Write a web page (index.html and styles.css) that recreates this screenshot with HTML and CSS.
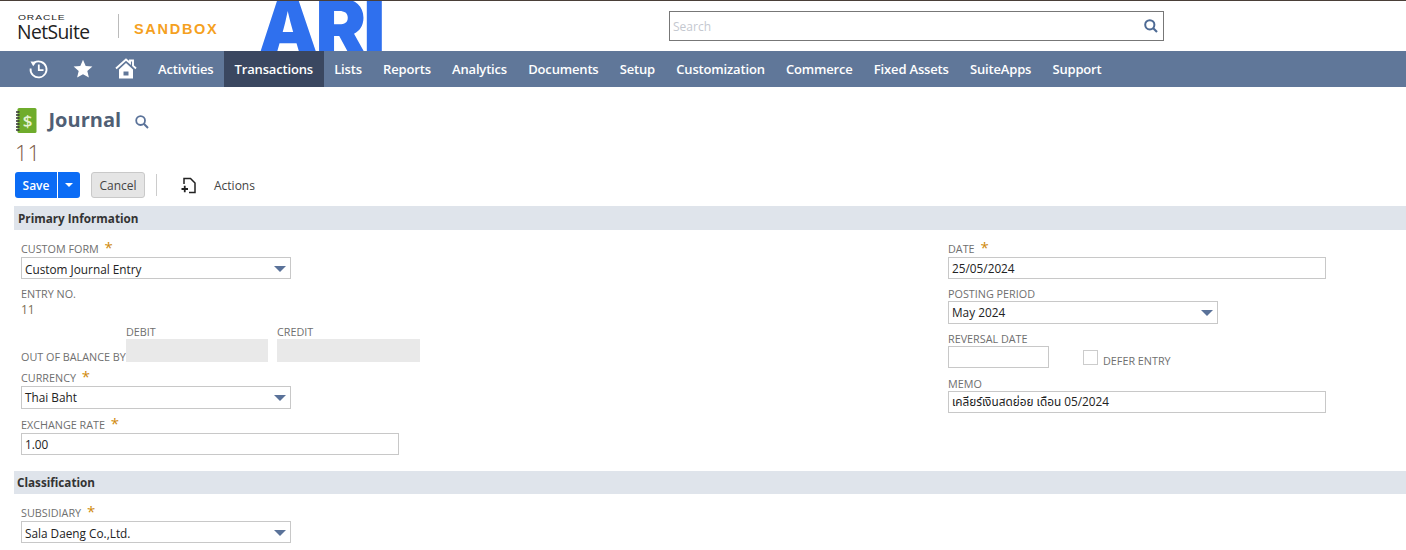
FILE: index.html
```html
<!DOCTYPE html>
<html lang="en">
<head>
<meta charset="utf-8">
<title>Journal - NetSuite</title>
<link rel="stylesheet" href="styles.css">
</head>
<body>
<header class="topbar">
  <div class="brand">
    <div class="ns-logo"><span class="ns-oracle">ORACLE</span><span class="ns-name">NetSuite</span></div>
    <div class="brand-sep"></div>
    <div class="sandbox">SANDBOX</div>
  </div>
  <div class="ari-logo"><span>ARI</span></div>
  <div class="search">
    <span class="search-ph">Search</span>
    <svg class="search-icon" width="14" height="14" viewBox="0 0 14 14"><circle cx="5.8" cy="5.8" r="4.6" fill="none" stroke="#4d6a94" stroke-width="2"/><path d="M9 9l4 4" stroke="#4d6a94" stroke-width="2.2"/></svg>
  </div>
</header>
<nav class="nav">
  <div class="nav-icons">
    <svg width="20" height="20" viewBox="0 0 20 20"><path d="M5.300 3.600A8 8 0 1 1 1.600 9.500" fill="none" stroke="#fff" stroke-width="1.800"/><path d="M1.500 2.500l6 .2-3.300 4.500z" fill="#fff"/><path d="M9.800 5.500V11.200h4.700" fill="none" stroke="#fff" stroke-width="1.800"/></svg>
    <svg width="20" height="20" viewBox="0 0 20 20"><path d="M10 .8l2.700 6.200 6.700.6-5.100 4.400 1.600 6.600L10 15.200l-5.900 3.400 1.600-6.600L.6 7.600l6.700-.6z" fill="#fff"/></svg>
    <svg class="home-icon" width="22" height="21" viewBox="0 0 22 21"><path d="M1 10.500L11 1.500l4 3.500V2.500h3v5.200L21 10.500" fill="none" stroke="#fff" stroke-width="1.900"/><path fill-rule="evenodd" d="M4 11.500L11 5l7 6.500V20.500H4zM8.500 13.500v4h5v-4z" fill="#fff"/></svg>
  </div>
  <a class="nav-item">Activities</a>
  <a class="nav-item active">Transactions</a>
  <a class="nav-item">Lists</a>
  <a class="nav-item">Reports</a>
  <a class="nav-item">Analytics</a>
  <a class="nav-item">Documents</a>
  <a class="nav-item">Setup</a>
  <a class="nav-item">Customization</a>
  <a class="nav-item">Commerce</a>
  <a class="nav-item">Fixed Assets</a>
  <a class="nav-item">SuiteApps</a>
  <a class="nav-item">Support</a>
</nav>
<main class="page">
  <div class="title-row">
    <svg class="title-icon" width="21" height="25" viewBox="0 0 21 25"><rect x="1.500" y="0" width="19" height="25" rx="1.500" fill="#6fac2c"/><path d="M0 4h3.500M0 7h3.500M0 10h3.500M0 13h3.500M0 16h3.500M0 19h3.500M0 22h3.500" stroke="#333" stroke-width="1.300"/><text class="title-icon-text" x="11.500" y="18.500">$</text></svg>
    <h1 class="title">Journal</h1>
    <svg class="title-search" width="14" height="14" viewBox="0 0 14 14"><circle cx="5.600" cy="5.600" r="4.400" fill="none" stroke="#5a7299" stroke-width="1.800"/><path d="M8.800 8.800l4.200 4.200" stroke="#5a7299" stroke-width="2"/></svg>
  </div>
  <div class="record-id">11</div>
  <div class="toolbar">
    <div class="save-group"><button class="btn-save">Save</button><button class="btn-caret"><span class="caret-white"></span></button></div>
    <button class="btn-cancel">Cancel</button>
    <div class="tool-sep"></div>
    <svg class="actions-icon" width="16" height="17" viewBox="0 0 16 17"><path d="M3 7V1.500h6.500L14 6v9.500H8" fill="none" stroke="#222" stroke-width="1.500"/><path d="M0.500 12h6.500M3.750 8.800v6.500" stroke="#222" stroke-width="1.800"/></svg>
    <span class="actions">Actions</span>
  </div>
  <h2 class="section section-a">Primary Information</h2>
  <div class="primary">
    <div class="col">
      <div class="label">CUSTOM FORM <i class="req">*</i></div>
      <div class="select wide-sel">Custom Journal Entry<span class="caret"></span></div>
      <div class="label gap8">ENTRY NO.</div>
      <div class="value">11</div>
      <div class="balance">
        <div class="balance-label label">OUT OF BALANCE BY</div>
        <div class="balance-cell debit"><div class="label">DEBIT</div><div class="grey-box"></div></div>
        <div class="balance-cell credit"><div class="label">CREDIT</div><div class="grey-box"></div></div>
      </div>
      <div class="label gap9">CURRENCY <i class="req">*</i></div>
      <div class="select wide-sel tall">Thai Baht<span class="caret"></span></div>
      <div class="label gap9">EXCHANGE RATE <i class="req">*</i></div>
      <input class="input rate" value="1.00">
    </div>
    <div class="col">
      <div class="label">DATE <i class="req">*</i></div>
      <input class="input long" value="25/05/2024">
      <div class="label gap8 tight">POSTING PERIOD</div>
      <div class="select wide-sel tall">May 2024<span class="caret"></span></div>
      <div class="label gap8 tight">REVERSAL DATE</div>
      <div class="reversal">
        <input class="input short">
        <span class="checkbox"></span>
        <span class="label defer">DEFER ENTRY</span>
      </div>
      <div class="label gap9 tight">MEMO</div>
      <input class="input long memo" value="เคลียร์เงินสดย่อย เดือน 05/2024">
    </div>
  </div>
  <h2 class="section section-b">Classification</h2>
  <div class="classification">
    <div class="label">SUBSIDIARY <i class="req">*</i></div>
    <div class="select wide-sel">Sala Daeng Co.,Ltd.<span class="caret"></span></div>
  </div>
</main>
</body>
</html>
```
FILE: styles.css
```css
* { box-sizing: border-box; }
html, body { margin: 0; padding: 0; height: 550px; overflow: hidden; background: #fff; }
body { font-family: "Open Sans", "Noto Sans", sans-serif; font-size: 12px; color: #222; }

.topbar { height: 51px; border-top: 1px solid #4a3f38; display: flex; align-items: stretch; position: relative; }
.brand { width: 260px; display: flex; align-items: center; flex: none; }
.ns-logo { margin-left: 17px; width: 73px; margin-top: 3px; display: flex; flex-direction: column; color: #222; }
.ns-oracle { font-family: "Liberation Sans", sans-serif; font-size: 8px; line-height: 9px; letter-spacing: .7px; margin-left: 1px; transform: scaleX(1.28); transform-origin: left; }
.ns-name { font-family: "Open Sans", sans-serif; font-size: 19.300px; line-height: 20px; letter-spacing: -.6px; }
.brand-sep { width: 1px; height: 24px; background: #bbb; margin-left: 28px; }
.sandbox { font-family: "Liberation Sans", sans-serif; font-weight: 700; font-size: 14.500px; letter-spacing: 1.700px; color: #f5a11f; margin-left: 15px; margin-top: 5px; white-space: nowrap; }
.ari-logo { width: 122px; flex: none; overflow: hidden; position: relative; }
.ari-logo span { display: block; font-family: "Inter", sans-serif; font-weight: 900; font-size: 76px; line-height: 50px; color: #2f70ee; letter-spacing: -3px; margin-left: -2px; }
.search { margin: 10px 0 0 287px; width: 495px; height: 30px; border: 1px solid #777; display: flex; align-items: center; justify-content: space-between; padding: 0 5px 0 3px; }
.search-ph { color: #c4c8d0; font-size: 12px; }
.search-icon { margin-top: -1px; }

.nav { height: 36px; background: #607799; display: flex; align-items: stretch; color: #fff; }
.nav-icons { width: 147.500px; flex: none; display: flex; align-items: center; gap: 24px; padding-left: 29px; }
.home-icon { margin: -2px 0 0 -2px; }
.nav-item { font-weight: 600; font-size: 13px; letter-spacing: -.165px; line-height: 36px; padding: 0 10.600px; color: #fff; white-space: nowrap; }
.nav-item.active { background: #3a4760; }

.page { display: block; }
.title-row { display: flex; align-items: center; height: 25px; margin-top: 21px; padding-left: 16px; }
.title-icon { flex: none; }
.title-icon-text { font-family: "Open Sans", sans-serif; font-size: 17px; font-weight: 600; fill: #e4f2d2; text-anchor: middle; }
.title { margin: -2px 0 0 11.500px; font-size: 20px; line-height: 24px; font-weight: 700; color: #505f75; }
.title-search { margin: 2px 0 0 14px; }
.record-id { font-size: 22px; font-weight: 300; line-height: 30px; color: #7a5a48; padding-left: 15px; margin-top: 4px; }
.toolbar { display: flex; align-items: center; height: 26px; margin-top: 5px; padding-left: 15px; }
.save-group { display: flex; gap: 1px; }
.btn-save, .btn-caret { border: 0; background: #0b6cf5; color: #fff; font: 600 12px "Open Sans", sans-serif; height: 26px; padding: 0; }
.btn-save { width: 42px; border-radius: 3px 0 0 3px; }
.btn-caret { width: 22px; border-radius: 0 3px 3px 0; display: flex; align-items: center; justify-content: center; }
.caret-white { width: 0; height: 0; border-left: 4px solid transparent; border-right: 4px solid transparent; border-top: 4px solid #fff; }
.btn-cancel { margin-left: 11px; width: 54px; height: 26px; background: #e5e5e5; border: 1px solid #c9c9c9; border-radius: 3px; font: 500 12px "Open Sans", sans-serif; color: #444; padding: 0; }
.tool-sep { width: 1px; height: 22px; background: #ccc; margin-left: 11px; }
.actions-icon { margin-left: 24px; }
.actions { margin-left: 17px; font-weight: 500; font-size: 12px; color: #444; }

.section { margin: 8px 0 0 14px; height: 24px; line-height: 24px; padding-left: 4px; background: #dfe4eb; font-size: 11.700px; font-weight: 700; color: #333; }
.section-a { line-height: 25px; }
.section-b { margin-top: 16px; height: 23px; line-height: 23px; padding-left: 3px; }
.primary { display: grid; grid-template-columns: 927px 1fr; padding: 12px 0 0 21px; }
.col { display: flex; flex-direction: column; align-items: flex-start; }
.label { font-size: 10.800px; line-height: 14px; color: #6f6f6f; height: 14px; white-space: nowrap; }
.req { font-style: normal; font-size: 15px; line-height: 0; color: #d08a0c; margin-left: 3px; }
.gap8 { margin-top: 8px; }
.gap9 { margin-top: 9px; }
.select, .input { display: block; border: 1px solid #c8c8c8; font: 11.800px "Open Sans", "Noto Sans Thai", "Noto Sans", sans-serif; color: #222; background: #fff; margin: 1px 0 0; }
.tight + .select, .tight + .reversal, .tight + .input { margin-top: 0; }
.select { position: relative; height: 22px; line-height: 20px; padding: 1px 0 0 3px; width: 270px; }
.select.tall { height: 23px; line-height: 21px; padding-top: 0; }
.caret { position: absolute; right: 4px; top: 8px; width: 0; height: 0; border-left: 6px solid transparent; border-right: 6px solid transparent; border-top: 6px solid #5a7299; }
.input { height: 22px; padding: 0 3px; outline: 0; }
.rate { width: 378px; }
.long { width: 378px; }
.short { width: 101px; margin: 0; }
.value { font-size: 12px; line-height: 16px; color: #7d6f55; height: 16px; padding-top: 1px; }
.balance { display: flex; align-items: flex-end; margin-top: 8px; height: 37px; }
.balance-label { width: 105px; height: 10px; line-height: 10px; }
.balance-cell { display: flex; flex-direction: column; }
.grey-box { height: 23px; background: #e9e9e9; }
.debit { width: 142px; }
.credit { width: 143px; margin-left: 9px; }
.reversal { display: flex; align-items: flex-start; height: 22px; }
.checkbox { width: 15px; height: 15px; border: 1px solid #ccc; margin: 4px 0 0 34px; }
.defer { margin: 8px 0 0 5px; }
.memo { margin-top: 0; }
.classification { display: flex; flex-direction: column; align-items: flex-start; padding: 12px 0 0 21px; }
```
